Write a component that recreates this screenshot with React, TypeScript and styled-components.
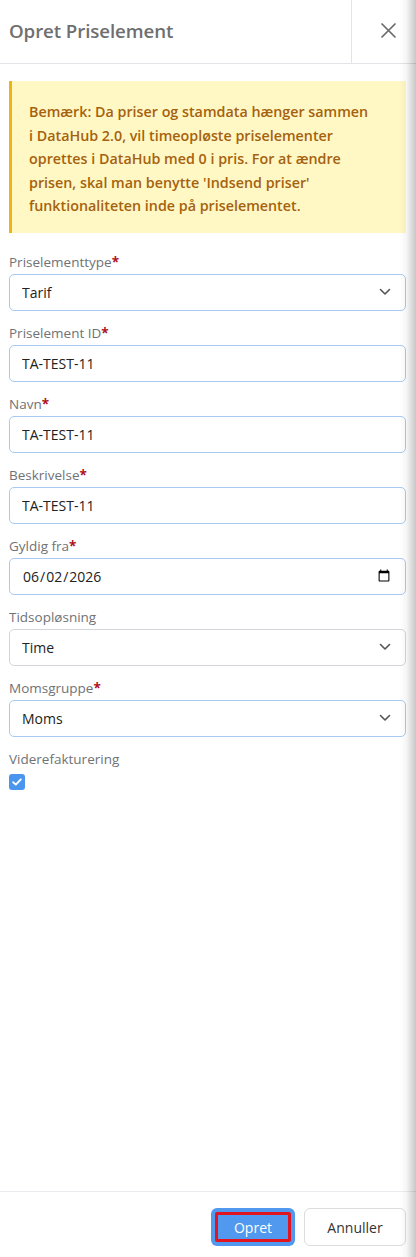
import React from "react";
import styled, { createGlobalStyle } from "styled-components";

const GlobalStyle = createGlobalStyle`
  html, body { margin: 0; padding: 0; background: #fff; }
  body { font-family: "Open Sans", "Noto Sans", sans-serif; }
  * { box-sizing: border-box; }
`;

const Panel = styled.div`
  position: relative;
  display: flex;
  flex-direction: column;
  height: 1257px;
  background: #fff;
  overflow: hidden;
`;

const EdgeShade = styled.div`
  position: absolute;
  top: 0;
  right: 0;
  bottom: 0;
  width: 16px;
  pointer-events: none;
  background: linear-gradient(
    to right,
    rgba(0, 0, 0, 0) 0%,
    rgba(0, 0, 0, 0.04) 40%,
    rgba(0, 0, 0, 0.22) 100%
  );
`;

const Header = styled.header`
  display: flex;
  height: 64px;
  border-bottom: 1px solid #e4e4e8;
  flex-shrink: 0;
`;

const Title = styled.h1`
  flex: 1;
  margin: 0;
  padding: 0 0 3px 9px;
  display: flex;
  align-items: center;
  font-size: 18.7px;
  font-weight: 600;
  color: #6f6f6f;
  letter-spacing: -0.1px;
`;

const CloseButton = styled.button`
  width: 65px;
  border: none;
  border-left: 1px solid #e4e4e8;
  background: transparent;
  display: flex;
  align-items: center;
  padding: 0 0 3px 29px;
  color: #6a6a6a;
  cursor: pointer;
`;

const Body = styled.main`
  flex: 1;
  padding: 17px 10px 0 9px;
  display: flex;
  flex-direction: column;
`;

const Notice = styled.div`
  background: #fff8c5;
  border-left: 3px solid #efb412;
  padding: 19px 12px 15px 17px;
  color: #a5620e;
  font-size: 14.3px;
  font-weight: 600;
  line-height: 23.6px;
  margin-bottom: 19px;
`;

const Form = styled.form`
  display: flex;
  flex-direction: column;
  gap: 12px;
`;

const Field = styled.div`
  display: flex;
  flex-direction: column;
`;

const Label = styled.label`
  font-size: 13.5px;
  line-height: 21px;
  color: #6f7276;
  margin-bottom: 1px;
`;

const Required = styled.span`
  color: #b0101a;
  font-weight: 700;
`;

const controlBase = `
  width: 100%;
  height: 37px;
  border-radius: 5px;
  background: #fff;
  font-family: "Open Sans", "Noto Sans", sans-serif;
  font-size: 14px;
  color: #222;
  padding: 0 12px;
  outline: none;
`;

const TextInput = styled.input<{ $muted?: boolean }>`
  ${controlBase}
  border: 1px solid ${(p) => (p.$muted ? "#d2d5da" : "#a9c9f2")};
`;

const SelectWrap = styled.div`
  position: relative;
`;

const Select = styled.select<{ $muted?: boolean }>`
  ${controlBase}
  appearance: none;
  -webkit-appearance: none;
  border: 1px solid ${(p) => (p.$muted ? "#d2d5da" : "#a9c9f2")};
`;

const Chevron = styled.svg`
  position: absolute;
  right: 15px;
  top: 50%;
  transform: translateY(-50%);
  pointer-events: none;
`;

const CheckBox = styled.span`
  margin-top: 3px;
  width: 16px;
  height: 16px;
  border-radius: 3px;
  background: #4b95ee;
  display: flex;
  align-items: center;
  justify-content: center;
`;

const Footer = styled.footer`
  border-top: 1px solid #ececf0;
  display: flex;
  justify-content: flex-end;
  gap: 9px;
  padding: 16px 10px 11px 9px;
  flex-shrink: 0;
`;

const Button = styled.button<{ $primary?: boolean }>`
  height: 38px;
  border-radius: 6px;
  font-family: "Open Sans", "Noto Sans", sans-serif;
  font-size: 14px;
  cursor: pointer;
  ${(p) =>
    p.$primary
      ? `
    width: 84px;
    background: #5199ee;
    color: #fff;
    border: none;
    outline: 3px solid #e0151f;
    outline-offset: -7px;
  `
      : `
    width: 102px;
    background: #fff;
    color: #333;
    border: 1px solid #dcdcdf;
  `}
`;

const ChevronIcon = () => (
  <Chevron width="12" height="8" viewBox="0 0 12 8" fill="none">
    <path d="M1.5 1.5 6 6l4.5-4.5" stroke="#555" strokeWidth="1.6" strokeLinecap="round" strokeLinejoin="round" />
  </Chevron>
);

export default function App() {
  return (
    <>
      <GlobalStyle />
      <Panel>
        <Header>
          <Title>Opret Priselement</Title>
          <CloseButton aria-label="Luk">
            <svg width="15" height="15" viewBox="0 0 15 15">
              <path d="M1 1l13 13M14 1 1 14" stroke="#6a6a6a" strokeWidth="1.7" strokeLinecap="round" />
            </svg>
          </CloseButton>
        </Header>
        <Body>
          <Notice>
            Bemærk: Da priser og stamdata hænger sammen
            <br />
            i DataHub 2.0, vil timeopløste priselementer
            <br />
            oprettes i DataHub med 0 i pris. For at ændre
            <br />
            prisen, skal man benytte 'Indsend priser'
            <br />
            funktionaliteten inde på priselementet.
          </Notice>
          <Form>
            <Field>
              <Label>
                Priselementtype<Required>*</Required>
              </Label>
              <SelectWrap>
                <Select defaultValue="Tarif">
                  <option>Tarif</option>
                </Select>
                <ChevronIcon />
              </SelectWrap>
            </Field>
            <Field>
              <Label>
                Priselement ID<Required>*</Required>
              </Label>
              <TextInput defaultValue="TA-TEST-11" />
            </Field>
            <Field>
              <Label>
                Navn<Required>*</Required>
              </Label>
              <TextInput defaultValue="TA-TEST-11" />
            </Field>
            <Field>
              <Label>
                Beskrivelse<Required>*</Required>
              </Label>
              <TextInput defaultValue="TA-TEST-11" />
            </Field>
            <Field>
              <Label>
                Gyldig fra<Required>*</Required>
              </Label>
              <TextInput type="date" defaultValue="2026-06-02" />
            </Field>
            <Field>
              <Label>Tidsopløsning</Label>
              <SelectWrap>
                <Select $muted defaultValue="Time">
                  <option>Time</option>
                </Select>
                <ChevronIcon />
              </SelectWrap>
            </Field>
            <Field>
              <Label>
                Momsgruppe<Required>*</Required>
              </Label>
              <SelectWrap>
                <Select defaultValue="Moms">
                  <option>Moms</option>
                </Select>
                <ChevronIcon />
              </SelectWrap>
            </Field>
            <Field>
              <Label>Viderefakturering</Label>
              <CheckBox>
                <svg width="10" height="8" viewBox="0 0 10 8" fill="none">
                  <path d="M1.2 4.2 3.8 6.6 8.8 1.4" stroke="#fff" strokeWidth="1.9" strokeLinecap="round" strokeLinejoin="round" />
                </svg>
              </CheckBox>
            </Field>
          </Form>
        </Body>
        <Footer>
          <Button $primary>Opret</Button>
          <Button>Annuller</Button>
        </Footer>
        <EdgeShade />
      </Panel>
    </>
  );
}
